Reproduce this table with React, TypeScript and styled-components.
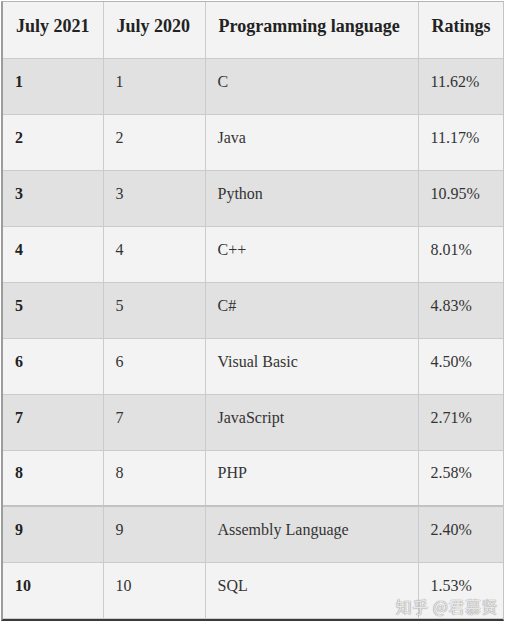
import React from "react";
import styled, { createGlobalStyle } from "styled-components";

const Global = createGlobalStyle`
  html, body { margin: 0; padding: 0; background: #ffffff; }
  body { font-family: "Liberation Serif", "Times New Roman", serif; }
`;

const Frame = styled.div`
  position: relative;
  box-sizing: border-box;
  width: 503px;
  margin: 1px 0 0 1px;
  border-left: 2px solid #9c9c9c;
  border-top: 1px solid #b4b4b4;
  border-right: 1px solid #c4c4c4;
  border-bottom: 2px solid #3a3a3a;
  background: #f3f3f3;
`;

const Table = styled.table`
  width: 100%;
  border-collapse: collapse;
  table-layout: fixed;
`;

const HeadCell = styled.th`
  height: 56px;
  box-sizing: border-box;
  padding: 0 0 6px 13px;
  text-align: left;
  vertical-align: middle;
  font-weight: 700;
  font-size: 18px;
  color: #222;
  background: #f3f3f3;
  border-right: 1px solid #cbcbcb;
  border-bottom: 1px solid #cbcbcb;
  white-space: nowrap;
  &:last-child { border-right: none; }
`;

const Row = styled.tr<{ $shade: boolean; $thick?: boolean }>`
  background: ${(p) => (p.$shade ? "#e1e1e1" : "#f3f3f3")};
  border-top: ${(p) => (p.$thick ? "2px solid #c2c2c2" : "none")};
`;

const Cell = styled.td<{ $bold?: boolean }>`
  height: 56px;
  box-sizing: border-box;
  padding: 0 0 9px 12px;
  vertical-align: middle;
  font-size: 16px;
  font-weight: ${(p) => (p.$bold ? 700 : 400)};
  color: ${(p) => (p.$bold ? "#222" : "#333")};
  border-right: 1px solid #cbcbcb;
  border-bottom: 1px solid #cbcbcb;
  white-space: nowrap;
  &:last-child { border-right: none; }
`;

const Watermark = styled.div`
  position: absolute;
  right: 5px;
  bottom: 4px;
  font-family: "Noto Sans CJK SC", sans-serif;
  font-size: 16px;
  line-height: 18px;
  letter-spacing: 0.5px;
  color: rgba(255, 255, 255, 0.8);
  text-shadow: 0 0 1px #8f8f8f, 0 0 1px #8f8f8f;
  pointer-events: none;
`;

const data: [string, string, string, string][] = [
  ["1", "1", "C", "11.62%"],
  ["2", "2", "Java", "11.17%"],
  ["3", "3", "Python", "10.95%"],
  ["4", "4", "C++", "8.01%"],
  ["5", "5", "C#", "4.83%"],
  ["6", "6", "Visual Basic", "4.50%"],
  ["7", "7", "JavaScript", "2.71%"],
  ["8", "8", "PHP", "2.58%"],
  ["9", "9", "Assembly Language", "2.40%"],
  ["10", "10", "SQL", "1.53%"],
];

export default function App() {
  return (
    <>
      <Global />
      <Frame>
        <Table>
          <colgroup>
            <col style={{ width: 100 }} />
            <col style={{ width: 102 }} />
            <col style={{ width: 213 }} />
            <col />
          </colgroup>
          <thead>
            <tr>
              <HeadCell>July 2021</HeadCell>
              <HeadCell>July 2020</HeadCell>
              <HeadCell>Programming language</HeadCell>
              <HeadCell>Ratings</HeadCell>
            </tr>
          </thead>
          <tbody>
            {data.map((r, i) => (
              <Row key={r[0]} $shade={i % 2 === 0} $thick={i === 8}>
                <Cell $bold>{r[0]}</Cell>
                <Cell>{r[1]}</Cell>
                <Cell>{r[2]}</Cell>
                <Cell>{r[3]}</Cell>
              </Row>
            ))}
          </tbody>
        </Table>
        <Watermark>知乎 @君慕贤</Watermark>
      </Frame>
    </>
  );
}
